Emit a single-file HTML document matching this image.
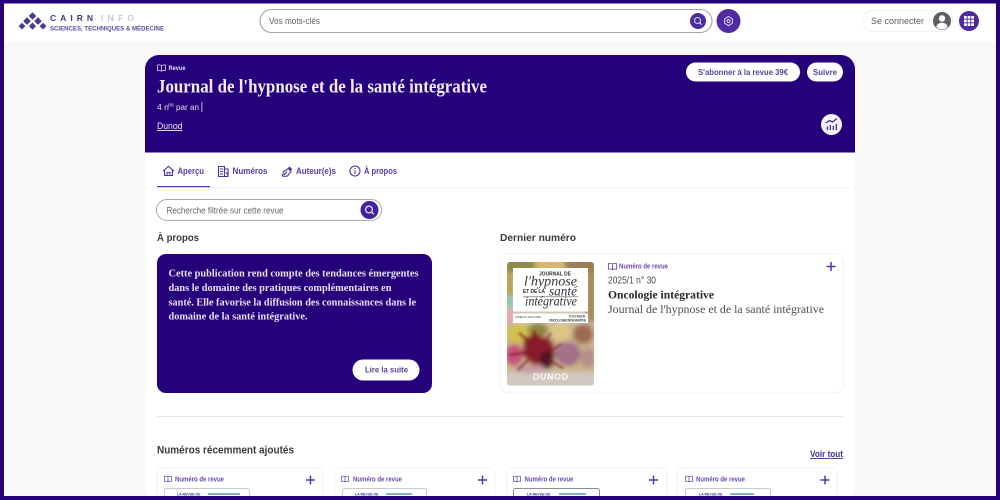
<!DOCTYPE html>
<html lang="fr"><head><meta charset="utf-8"><title>Journal de l'hypnose et de la santé intégrative</title>
<style>
html,body{margin:0;padding:0;width:1000px;height:500px;overflow:hidden;background:#26007a}
svg{display:block;filter:blur(.35px)}
.s{font-family:"Liberation Sans",sans-serif}
.r{font-family:"Liberation Serif",serif}
text{white-space:pre}
</style></head><body>
<svg width="1000" height="500" viewBox="0 0 1000 500" xmlns="http://www.w3.org/2000/svg">
<defs>
<filter id="b4" x="-30%" y="-30%" width="160%" height="160%"><feGaussianBlur stdDeviation="2.500"/></filter>
<filter id="b1" x="-30%" y="-30%" width="160%" height="160%"><feGaussianBlur stdDeviation="1.200"/></filter>
<clipPath id="cov"><rect x="507" y="262" width="87" height="123.500" rx="3"/></clipPath>
<symbol id="book" viewBox="0 0 12 10"><path d="M6 1.800C4.800.8 2.500.7.700 1v7.500c1.800-.3 4.100-.2 5.300.8 1.200-1 3.500-1.100 5.300-.8V1C9.500.7 7.200.8 6 1.800zM6 1.800v7.500" fill="none" stroke="currentColor" stroke-width="1"/></symbol>
</defs>
<rect width="1000" height="500" fill="#f8f8f9"/>
<rect x="0" y="0" width="1000" height="42" fill="#fff"/>

<!-- logo -->
<g fill="#4d3a8c">
<path d="M32.500 12.200l3.800 3.800-3.800 3.800-3.800-3.800z"/>
<path d="M27 17.300l3.800 3.800-3.800 3.800-3.800-3.800z"/><path d="M38 17.300l3.800 3.800-3.800 3.800-3.800-3.800z"/>
<path d="M22 22.700l3.400 3.400-3.400 3.400-3.400-3.400z"/><path d="M32.500 22.500l3.600 3.600-3.600 3.600-3.600-3.600z"/><path d="M43 22.700l3.400 3.400-3.400 3.400-3.400-3.400z"/>
</g>
<text x="50" y="21" class="s" font-size="8.500" font-weight="700" fill="#43357f" textLength="43" lengthAdjust="spacing">CAIRN</text>
<text x="94" y="21" class="s" font-size="8.500" fill="#b5aed2" textLength="40" lengthAdjust="spacing">·INFO</text>
<text x="50" y="30.500" class="s" font-size="6.300" font-weight="700" fill="#5a4a9e" textLength="114" lengthAdjust="spacingAndGlyphs">SCIENCES, TECHNIQUES &amp; MÉDECINE</text>

<!-- search -->
<rect x="260" y="9.500" width="452" height="23" rx="11.500" fill="#fff" stroke="#a4a4a9" stroke-width="1.100"/>
<text x="269" y="24" class="s" font-size="9.500" fill="#5f5f66" textLength="51" lengthAdjust="spacingAndGlyphs">Vos mots-clés</text>
<circle cx="698" cy="21" r="8" fill="#4f2a9f"/>
<circle cx="697.500" cy="20.500" r="3" fill="none" stroke="#d8cff0" stroke-width="1.100"/><path d="M699.700 22.700l2 2" stroke="#d8cff0" stroke-width="1.100"/>
<circle cx="728.500" cy="21" r="12" fill="#522ba2"/>
<path d="M728.500 16.500l3.900 2.250v4.500l-3.900 2.250-3.900-2.250v-4.500z" fill="none" stroke="#e2daf5" stroke-width="1"/><circle cx="728.500" cy="21" r="1.500" fill="none" stroke="#e2daf5" stroke-width=".9"/>

<!-- login -->
<rect x="862.500" y="10.500" width="90" height="21" rx="10.500" fill="#fff" stroke="#f0f0f2"/>
<text x="871" y="24" class="s" font-size="9.500" fill="#5a5a61" textLength="53" lengthAdjust="spacingAndGlyphs">Se connecter</text>
<circle cx="942" cy="21" r="9" fill="#5e5e63"/>
<circle cx="942" cy="18.500" r="3.200" fill="#fff"/><path d="M936.300 27c.5-3 3-4.300 5.700-4.300s5.200 1.300 5.700 4.300c-1.500 1.600-3.500 2.500-5.700 2.500s-4.200-.9-5.700-2.500z" fill="#fff"/>
<circle cx="969" cy="21" r="10" fill="#4f2a9f"/>
<g fill="#fff"><rect x="964" y="16" width="2.800" height="2.800" rx=".5"/><rect x="967.600" y="16" width="2.800" height="2.800" rx=".5"/><rect x="971.200" y="16" width="2.800" height="2.800" rx=".5"/><rect x="964" y="19.600" width="2.800" height="2.800" rx=".5"/><rect x="967.600" y="19.600" width="2.800" height="2.800" rx=".5"/><rect x="971.200" y="19.600" width="2.800" height="2.800" rx=".5"/><rect x="964" y="23.200" width="2.800" height="2.800" rx=".5"/><rect x="967.600" y="23.200" width="2.800" height="2.800" rx=".5"/><rect x="971.200" y="23.200" width="2.800" height="2.800" rx=".5"/></g>

<!-- main card -->
<rect x="145" y="55" width="710" height="445" rx="14" fill="#fff"/>
<path d="M145 152.500V69a14 14 0 0 1 14-14h682a14 14 0 0 1 14 14v83.500z" fill="#26007a"/>
<use href="#book" x="157" y="64" width="9" height="8" color="#e6e0f5"/>
<text x="168.500" y="70" class="s" font-size="6.500" font-weight="700" fill="#e8e2f7" textLength="17" lengthAdjust="spacingAndGlyphs">Revue</text>
<text x="157" y="92.500" class="r" font-size="19" font-weight="700" fill="#f0ecfa" textLength="330" lengthAdjust="spacingAndGlyphs">Journal de l'hypnose et de la santé intégrative</text>
<text x="157" y="110" class="s" font-size="8.500" fill="#e4dff2">4 n</text>
<text x="168" y="106.500" class="s" font-size="5.500" fill="#e4dff2">os</text>
<text x="176" y="110" class="s" font-size="8.500" fill="#e4dff2" textLength="23" lengthAdjust="spacingAndGlyphs">par an</text>
<rect x="201.500" y="102" width=".8" height="10" fill="#e4dff2"/>
<text x="157" y="129" class="s" font-size="9" fill="#ece8f7" textLength="25.500" lengthAdjust="spacingAndGlyphs" text-decoration="underline">Dunod</text>

<rect x="686" y="62.500" width="114" height="19" rx="9.500" fill="#fff"/>
<text x="698" y="75" class="s" font-size="8.500" font-weight="700" fill="#5a4199" textLength="90" lengthAdjust="spacingAndGlyphs">S'abonner à la revue 39€</text>
<rect x="807" y="62.500" width="36" height="19" rx="9.500" fill="#fff"/>
<text x="813" y="75" class="s" font-size="8.500" font-weight="700" fill="#5a4199" textLength="24" lengthAdjust="spacingAndGlyphs">Suivre</text>
<circle cx="831.500" cy="124.500" r="10.500" fill="#f4f2fa"/>
<g stroke="#4b2f94" stroke-width="1.300" fill="none"><path d="M826 123l3.500-2.500 3 1.500 4.500-3.500"/><path d="M827.300 130v-3.500M830.300 130v-5M833.300 130v-4M836.300 130v-6"/></g>

<!-- tabs -->
<rect x="145" y="187" width="710" height="1" fill="#f3f3f5"/>
<rect x="157" y="186" width="53" height="1.200" fill="#5a34a8"/>
<g fill="none" stroke="#5130a0" stroke-width="1.100">
<path d="M163 171l5.500-4.500 5.500 4.500M164.500 170v5.500h8V170M167 175.500v-3h3v3"/>
<path d="M218.500 166.500h6v10h-6zM224.500 169h3.500v7.500h-3.500M220 169h3M220 171.500h3M220 174h3M226 172l2.500 4"/>
<path d="M282.500 176c.5-2 .5-3 1-4.500l5-3 2.500 3-3.500 4.500c-1.500.5-3 .5-5 0zM284 175l3-3.500"/>
<circle cx="355" cy="171" r="5"/><path d="M355 170.500v3.500M355 168v1.200"/>
</g>
<path d="M289.500 166.500l2.800 2.800-1.400 1.400-2.800-2.800z" fill="#5130a0"/>
<g class="s" font-size="9" font-weight="700" fill="#5a3ca3">
<text x="177.500" y="174" textLength="26.500" lengthAdjust="spacingAndGlyphs">Aperçu</text>
<text x="232.500" y="174" textLength="35" lengthAdjust="spacingAndGlyphs">Numéros</text>
<text x="296" y="174" textLength="40" lengthAdjust="spacingAndGlyphs">Auteur(e)s</text>
<text x="364" y="174" textLength="33" lengthAdjust="spacingAndGlyphs">À propos</text>
</g>

<!-- filter search -->
<rect x="156.500" y="199.500" width="225" height="21" rx="10.500" fill="#fff" stroke="#a9a9ad"/>
<text x="166.500" y="213.500" class="s" font-size="9" fill="#66666d" textLength="117" lengthAdjust="spacingAndGlyphs">Recherche filtrée sur cette revue</text>
<circle cx="369.500" cy="210" r="9" fill="#45229a"/>
<circle cx="369" cy="209.500" r="3.400" fill="none" stroke="#ece6f8" stroke-width="1.200"/><path d="M371.500 212l2.300 2.300" stroke="#ece6f8" stroke-width="1.200"/>

<text x="157" y="241" class="s" font-size="10.500" font-weight="700" fill="#3a3a40" textLength="42" lengthAdjust="spacingAndGlyphs">À propos</text>
<text x="500" y="241" class="s" font-size="10.500" font-weight="700" fill="#3a3a40" textLength="76" lengthAdjust="spacingAndGlyphs">Dernier numéro</text>

<!-- about box -->
<rect x="157" y="254" width="275" height="139" rx="9" fill="#26007a"/>
<g class="r" font-size="10.500" font-weight="700" fill="#e6e1f5">
<text x="168.500" y="276.500" textLength="250" lengthAdjust="spacingAndGlyphs">Cette publication rend compte des tendances émergentes</text>
<text x="168.500" y="291" textLength="223" lengthAdjust="spacingAndGlyphs">dans le domaine des pratiques complémentaires en</text>
<text x="168.500" y="305.500" textLength="247.500" lengthAdjust="spacingAndGlyphs">santé. Elle favorise la diffusion des connaissances dans le</text>
<text x="168.500" y="319.500" textLength="139" lengthAdjust="spacingAndGlyphs">domaine de la santé intégrative.</text>
</g>
<rect x="352.500" y="359.500" width="67" height="21" rx="10.500" fill="#fff"/>
<text x="365" y="372.500" class="s" font-size="8.500" font-weight="700" fill="#5a4199" textLength="43" lengthAdjust="spacingAndGlyphs">Lire la suite</text>

<!-- latest issue card -->
<rect x="500" y="254" width="343.500" height="139" rx="8" fill="#fff" stroke="#f1f1f3"/>
<g clip-path="url(#cov)">
<rect x="507" y="262" width="87" height="124" fill="#d3c8b8"/>
<g filter="url(#b4)">
<rect x="505" y="258" width="30" height="14" fill="#8f8a4a"/><rect x="535" y="258" width="30" height="14" fill="#d8b66a"/><rect x="565" y="258" width="32" height="14" fill="#9a7f52"/>
<rect x="505" y="272" width="10" height="24" fill="#b7a65a"/><rect x="586" y="272" width="10" height="50" fill="#a88a5c"/>
<rect x="505" y="296" width="10" height="12" fill="#8fc9b0"/><rect x="505" y="308" width="10" height="18" fill="#e5a8b4"/>
<rect x="505" y="324" width="92" height="50" fill="#c9b48a"/>
<ellipse cx="519" cy="334" rx="13" ry="10" fill="#cfc050"/>
<ellipse cx="538" cy="330" rx="10" ry="7" fill="#8e8740"/>
<ellipse cx="560" cy="332" rx="12" ry="8" fill="#dcc585"/>
<ellipse cx="583" cy="334" rx="10" ry="10" fill="#9c6a50"/>
<path d="M523 340l10-7 8 3 12 5 2 14-8 10-14 0-10-9z" fill="#8a1d2c"/>
<ellipse cx="514" cy="355" rx="9" ry="11" fill="#c8507a"/>
<ellipse cx="568" cy="354" rx="13" ry="12" fill="#a3718a"/>
<ellipse cx="588" cy="358" rx="7" ry="10" fill="#b58f88"/>
<ellipse cx="547" cy="360" rx="7" ry="9" fill="#4d1626"/>
<rect x="505" y="372" width="92" height="16" fill="#d2c8bf"/>
<ellipse cx="530" cy="369" rx="16" ry="4" fill="#c49aa0"/>
</g>
<g filter="url(#b1)" stroke-width="1.500" fill="none">
<path d="M533 345l-14-12M538 345l-4-14M543 345l8-12M528 352l-18 3M548 352l14-8M545 358l18 10M530 358l-12 12" stroke="#7a1628"/>
</g>
<rect x="513" y="268" width="75" height="43.500" fill="#fff"/>
<rect x="513" y="313.500" width="75" height="9.500" fill="#fff"/>
<text x="539" y="275.500" class="s" font-size="5.500" font-weight="700" fill="#2d2d33" textLength="32" lengthAdjust="spacingAndGlyphs">JOURNAL DE</text>
<text x="524" y="285.500" class="r" font-size="14" font-style="italic" fill="#33333d" textLength="53" lengthAdjust="spacingAndGlyphs">l'hypnose</text>
<text x="523" y="293" class="s" font-size="5" font-weight="700" fill="#2d2d33" textLength="22" lengthAdjust="spacingAndGlyphs">ET DE LA</text>
<text x="549" y="295.500" class="r" font-size="13.500" font-style="italic" fill="#33333d" textLength="28" lengthAdjust="spacingAndGlyphs">santé</text>
<text x="525" y="305.500" class="r" font-size="13.500" font-style="italic" fill="#33333d" textLength="52" lengthAdjust="spacingAndGlyphs">intégrative</text>
<rect x="523" y="296.500" width="55" height=".6" fill="#55555c"/>
<text x="515" y="318" class="s" font-size="3" fill="#66666c" textLength="26" lengthAdjust="spacing">ANNÉE 18 · JUILLET 2025</text>
<text x="569" y="317.500" class="s" font-size="3.200" font-weight="700" fill="#444" textLength="16" lengthAdjust="spacing">DOSSIER</text>
<text x="549" y="321.500" class="s" font-size="3.200" font-weight="700" fill="#444" textLength="37" lengthAdjust="spacing">ONCOLOGIE INTÉGRATIVE</text>
<text x="533" y="379.500" class="s" font-size="8.500" fill="#fff" stroke="#fff" stroke-width=".3" textLength="35" lengthAdjust="spacing">DUNOD</text>
</g>

<use href="#book" x="608" y="262.500" width="9" height="8" color="#5a34a8"/>
<text x="619" y="268.500" class="s" font-size="7" font-weight="700" fill="#6a48b3" textLength="49" lengthAdjust="spacingAndGlyphs">Numéro de revue</text>
<text x="608" y="283.500" class="s" font-size="10.500" fill="#45454b" textLength="48" lengthAdjust="spacingAndGlyphs">2025/1 n° 30</text>
<text x="608" y="298.500" class="r" font-size="12" font-weight="700" fill="#26262b" textLength="106" lengthAdjust="spacingAndGlyphs">Oncologie intégrative</text>
<text x="608" y="313" class="r" font-size="12" fill="#4d4d53" textLength="216" lengthAdjust="spacingAndGlyphs">Journal de l'hypnose et de la santé intégrative</text>
<path d="M831 262v9M826.500 266.500h9" stroke="#5a34a8" stroke-width="1.500"/>

<rect x="157" y="416" width="686" height="1" fill="#e7e7ea"/>

<text x="157" y="453.500" class="s" font-size="11" font-weight="700" fill="#3a3a40" textLength="137" lengthAdjust="spacingAndGlyphs">Numéros récemment ajoutés</text>
<text x="810" y="457" class="s" font-size="9" font-weight="700" fill="#4b2f94" textLength="33" lengthAdjust="spacingAndGlyphs" text-decoration="underline">Voir tout</text>

<!-- bottom cards -->
<g fill="#fff" stroke="#f3f3f5">
<rect x="157.500" y="467.500" width="166" height="40" rx="6"/><rect x="334.500" y="467.500" width="160" height="40" rx="6"/>
<rect x="506.500" y="467.500" width="160" height="40" rx="6"/><rect x="677.500" y="467.500" width="160" height="40" rx="6"/>
</g>
<g color="#5a34a8">
<use href="#book" x="164" y="475.500" width="8" height="7"/><use href="#book" x="341" y="475.500" width="8" height="7"/>
<use href="#book" x="513" y="475.500" width="8" height="7"/><use href="#book" x="685" y="475.500" width="8" height="7"/>
</g>
<g class="s" font-size="7" font-weight="700" fill="#6a48b3">
<text x="175" y="481.500" textLength="49" lengthAdjust="spacingAndGlyphs">Numéro de revue</text>
<text x="353" y="481.500" textLength="49" lengthAdjust="spacingAndGlyphs">Numéro de revue</text>
<text x="524.500" y="481.500" textLength="49" lengthAdjust="spacingAndGlyphs">Numéro de revue</text>
<text x="696" y="481.500" textLength="49" lengthAdjust="spacingAndGlyphs">Numéro de revue</text>
</g>
<g stroke="#5a34a8" stroke-width="1.500">
<path d="M310.500 475.500v9M306 480h9M482.500 475.500v9M478 480h9M653.500 475.500v9M649 480h9M825 475.500v9M820.500 480h9"/>
</g>
<g fill="#fff" stroke="#c9c9cd">
<rect x="164.500" y="488.500" width="85" height="14" rx="2"/><rect x="342.500" y="488.500" width="84" height="14" rx="2"/>
<rect x="513.500" y="488.500" width="86" height="14" rx="2" stroke="#8d8d95"/><rect x="685.500" y="488.500" width="85" height="14" rx="2"/>
</g>
<g class="s" font-size="3.500" font-weight="700" fill="#27408f">
<text x="177" y="495.500">LA REVUE DE</text><text x="355" y="495.500">LA REVUE DE</text><text x="527" y="495.500">LA REVUE DE</text><text x="699" y="495.500">LA REVUE DE</text>
</g>
<g fill="#7fb3c9"><rect x="208" y="493" width="32" height="2"/><rect x="386" y="493" width="26" height="2"/><rect x="559" y="493" width="27" height="2"/><rect x="730" y="493" width="24" height="2"/></g>

<!-- viewport frame -->
<path d="M0 0h1000v500H0zM4 3.500v492.500h992V3.500z" fill="#26007a" fill-rule="evenodd"/>
</svg>
</body></html>
